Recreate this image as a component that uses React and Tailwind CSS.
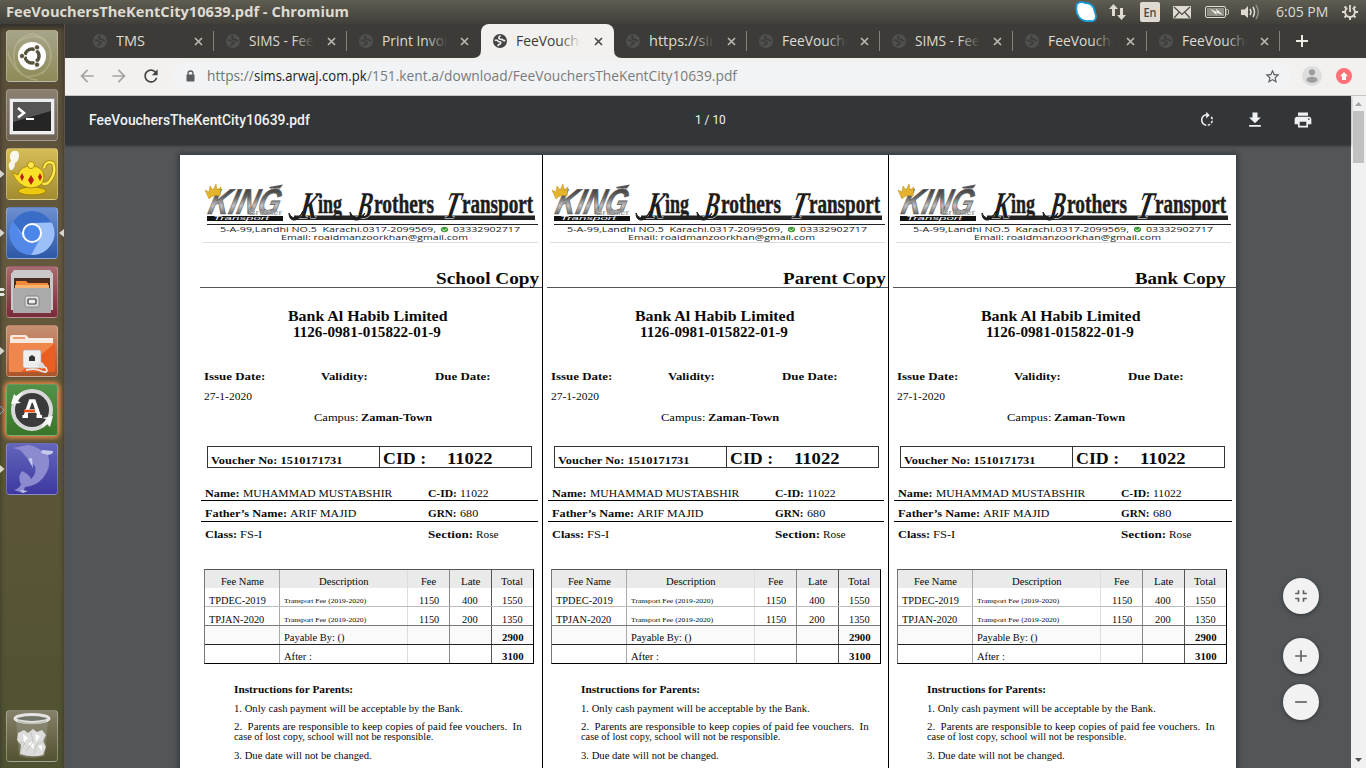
import React, { useLayoutEffect, useRef } from 'react';
import {
  MdRotateRight, MdFileDownload, MdPrint, MdRefresh, MdArrowBack, MdArrowForward,
  MdStarBorder, MdFullscreenExit, MdAdd, MdRemove,
} from 'react-icons/md';

/* Text stretched horizontally so that it fills a box of the given width. */
function Fit({ w, className = '', children }) {
  const ref = useRef(null);
  useLayoutEffect(() => {
    const el = ref.current;
    el.style.transform = `scaleX(${w / el.offsetWidth})`;
  }, [w, children]);
  return (
    <span className={`inline-block shrink-0 text-left ${className}`} style={{ width: w }}>
      <span ref={ref} className="inline-block origin-left whitespace-pre">{children}</span>
    </span>
  );
}

function Globe({ active }) {
  return (
    <svg viewBox="0 0 14 14" className={`h-3.5 w-3.5 shrink-0 ${active ? 'text-[#444444]' : 'text-[#50504d]'}`}>
      <circle cx="7" cy="7" r="7" fill="currentColor" />
      <path d="M1.700 6.200 H4.200 Q5 8 7.600 8 Q8.200 9.600 6.600 10.200 Q5 10.400 5.200 12.200 M7.600 1.800 Q5.600 2.600 5.800 4.400 Q7.600 5.800 9.400 5.400 Q10.600 7 12.300 6.600" fill="none" stroke={active ? '#f2f1f0' : '#3c3b37'} strokeWidth="1.600" />
    </svg>
  );
}

function Title({ active, title, w }) {
  return (
    <div className="relative ml-[9px] h-5 w-[72px] shrink-0 overflow-hidden text-[14px] leading-5">
      <Fit w={w}>{title}</Fit>
      {w > 60 && (
        <div className={`absolute right-0 top-0 h-5 w-7 bg-gradient-to-r ${active ? 'from-[#f2f1f000] to-[#f2f1f0] to-75%' : 'from-[#3c3b3700] to-[#3c3b37] to-75%'}`} />
      )}
    </div>
  );
}

function Tab({ title, w, active, sep }) {
  return (
    <div className={`flex h-[34px] w-[133.2px] shrink-0 items-center pl-3 ${active ? 'relative rounded-t-lg bg-[#f2f1f0] text-[#3c3b37]' : 'text-[#dfdbd2]'}`}>
      <Globe active={active} />
      <Title active={active} title={title} w={w} />
      <svg viewBox="0 0 13 13" className={`ml-1 h-[13px] w-[13px] shrink-0 ${active ? 'text-[#4a4946]' : 'text-[#bab7b0]'}`}>
        <path d="M3 3 L10 10 M10 3 L3 10" stroke="currentColor" strokeWidth="1.700" />
      </svg>
      {sep && <div className="ml-auto h-5 w-px shrink-0 bg-[#84827c]" />}
      {active && (
        <>
          <svg viewBox="0 0 8 8" className="absolute -left-2 bottom-0 h-2 w-2"><path d="M8 0 V8 H0 Q8 8 8 0" fill="#f2f1f0" /></svg>
          <svg viewBox="0 0 8 8" className="absolute -right-2 bottom-0 h-2 w-2"><path d="M0 0 V8 H8 Q0 8 0 0" fill="#f2f1f0" /></svg>
        </>
      )}
    </div>
  );
}

const tabs = [
  { title: 'TMS', w: 29, sep: true },
  { title: 'SIMS - Fee_', w: 71, sep: true },
  { title: 'Print Invoice', w: 80 },
  { title: 'FeeVouchers', w: 83, active: true },
  { title: 'https://sims', w: 81, sep: true },
  { title: 'FeeVouchers', w: 83, sep: true },
  { title: 'SIMS - Fee_', w: 71, sep: true },
  { title: 'FeeVouchers', w: 83, sep: true },
  { title: 'FeeVouchers', w: 83, sep: true },
];

function StatusIcons() {
  return (
    <svg viewBox="1070 0 200 24" className="h-6 w-[200px]">
      <path d="M1077 4 Q1080 1 1085 3 Q1092 3 1094 9 Q1095 13 1096 16 Q1096 22 1090 21 Q1083 22 1079 17 Q1075 12 1077 4Z" fill="#fff" stroke="#189cda" strokeWidth="1.8" />
      <g fill="#dfdbd2">
        <path d="M1109 9 L1113.500 4 L1118 9 H1115 V16 H1112 V9Z M1117 15 H1120 V8 H1123 V15 H1126 L1121.500 20Z" />
        <rect x="1140" y="2" width="20" height="20" rx="2" />
        <rect x="1173" y="6" width="18" height="12.500" />
        <path d="M1241 9.500 H1244.500 L1248 6 V18 L1244.500 15 H1241Z" />
      </g>
      <text x="1143.500" y="17" fontSize="12" fontWeight="600" textLength="13" lengthAdjust="spacingAndGlyphs" fill="#4a4843" fontFamily="Open Sans, sans-serif">En</text>
      <path d="M1174 7 L1182 14.500 L1190 7 M1174 18 L1179 12.500 M1190 18 L1185 12.500" fill="none" stroke="#4a4843" strokeWidth="1.200" />
      <rect x="1205.500" y="6.500" width="20" height="11" rx="1.500" fill="none" stroke="#dfdbd2" />
      <rect x="1207" y="8" width="17" height="8" fill="#908d85" />
      <rect x="1226" y="9.500" width="2.500" height="5" rx="1" fill="none" stroke="#dfdbd2" strokeWidth=".8" />
      <path d="M1210 9 L1217 12 L1216 8.500 L1223 15 L1216 12.500 L1217 15.500Z" fill="#f2efe8" />
      <path d="M1250 9 Q1252 12 1250 15" fill="none" stroke="#dfdbd2" strokeWidth="1.500" />
      <path d="M1253 7 Q1256 12 1253 17" fill="none" stroke="#dfdbd2" strokeWidth="1.500" />
      <path d="M1256 5 Q1260.500 12 1256 19" fill="none" stroke="#8f8c84" strokeWidth="1.500" />
    </svg>
  );
}

function PowerGear() {
  return (
    <svg viewBox="0 0 16 16" className="ml-[14px] h-4 w-4" fill="none" stroke="#dfdbd2">
      <path d="M5.300 4 A4.900 4.900 0 1 0 10.700 4 M8 1 V8" strokeWidth="1.800" />
      <path d="M2.500 2.500 L4.300 4.300 M13.500 2.500 L11.700 4.300 M0 8 H3 M13 8 H16 M2.500 13.500 L4.300 11.700 M13.500 13.500 L11.700 11.700 M8 13 V16" strokeWidth="2" />
    </svg>
  );
}

function MenuBar() {
  return (
    <header className="flex h-6 items-center bg-gradient-to-b from-[#5f5d50] to-[#403f3a] pl-1.5 text-[14px] leading-6 text-[#dfdbd2]">
      <Fit w={343} className="font-bold">FeeVouchersTheKentCity10639.pdf - Chromium</Fit>
      <div className="ml-[721px]"><StatusIcons /></div>
      <Fit w={52} className="ml-1.5">6:05 PM</Fit>
      <PowerGear />
    </header>
  );
}

const art = {
  dash: (
    <>
      <path d="M26 4 Q48 8 44 32 Q38 48 18 46 M26 4 Q6 8 8 30 Q12 48 32 50 M10 14 Q28 0 40 12 Q52 28 36 44 M2 22 Q8 46 30 50" fill="none" stroke="#d5d0b0" strokeOpacity=".35" strokeWidth="1.500" />
      <circle cx="26" cy="26" r="14" fill="#fff" />
      <circle cx="26" cy="26" r="7" fill="none" stroke="#57523c" strokeWidth="3.400" strokeDasharray="13 1.660" strokeDashoffset="6.500" />
      <g fill="#57523c" stroke="#fff" strokeWidth=".8"><circle cx="16" cy="26" r="2.600" /><circle cx="31" cy="17.300" r="2.600" /><circle cx="31" cy="34.700" r="2.600" /></g>
    </>
  ),
  terminal: (
    <>
      <rect x="3.500" y="9.500" width="45" height="36" rx="1" fill="#eee" stroke="#999" />
      <rect x="7" y="13" width="38" height="29" fill="#252525" />
      <path d="M7 13 H45 V22 L7 33Z" fill="#555" />
      <path d="M12 19 L18 24 L12 28.500" fill="none" stroke="#fff" strokeWidth="2.500" />
      <path d="M20 30 H28" stroke="#fff" strokeWidth="2" />
    </>
  ),
  teapot: (
    <>
      <path d="M4 22 Q1 16 5 13 Q2 6 7 3 Q13 2 13 7 Q13 13 9 15 Q9 20 6 22Z" fill="#f7f7f0" />
      <path d="M38 20 Q40 12 47 15 Q51 24 43 34 Q38 38 35 34" fill="none" stroke="#9c8106" strokeWidth="4" />
      <path d="M38 20 Q40 12 47 15 Q51 24 43 34 Q38 38 35 34" fill="none" stroke="#ffe94e" strokeWidth="2.400" />
      <ellipse cx="26" cy="43" rx="14" ry="4" fill="#edc910" stroke="#9c8106" />
      <path d="M6 24 Q9 26 12 27 Q14 18 25 18 Q38 18 38 30 Q37 39 25 40 Q12 39 6 24Z" fill="#fbe02a" stroke="#b08d06" />
      <circle cx="25" cy="17" r="3.500" fill="#ffe94e" stroke="#b08d06" />
      <g fill="#bd1c16"><path d="M16 25 l2 4 l-2 4 l-2 -4z M25 27 l3 5 l-3 5 l-3 -5z M34 25 l2 4 l-2 4 l-2 -4z" /></g>
    </>
  ),
  chromium: (
    <>
      <circle cx="26" cy="26" r="22" fill="#6d9df0" />
      <path d="M7 15 A22 22 0 0 1 45 15 L26 16 L16 26Z" fill="#3a6dc8" />
      <path d="M26 16 H46 A22 22 0 0 1 25 48 L35 30Z" fill="#9bbff8" />
      <path d="M7 14 A22 22 0 0 0 25 48 L32 35 L17 31Z" fill="#5288e8" />
      <circle cx="26" cy="26" r="10" fill="#fff" /><circle cx="26" cy="26" r="8" fill="#4a85ea" />
    </>
  ),
  drawer: (
    <>
      <path d="M8 4 H44 L47 8 V44 H5 V8Z" fill="#c9c9c9" /><rect x="8" y="12" width="36" height="12" fill="#4b2c20" />
      <path d="M10 15 H20 L22 17 H42 V22 H10Z" fill="#f28a3c" /><path d="M9 19 H43 V24 H9Z" fill="#f6b36f" />
      <path d="M7 22 H45 V47 H7Z" fill="#aaa" />
      <rect x="19" y="30" width="14" height="11" rx="2" fill="#ddd" stroke="#888" /><rect x="22" y="33" width="8" height="5" rx="1" fill="#eee" stroke="#333" strokeWidth="1.200" />
    </>
  ),
  folder: (
    <>
      <path d="M4 46 V12 Q4 10 6 10 H20 L23 13 H47 V46Z" fill="#f6e9df" /><path d="M7 12 H19 V14 H7Z" fill="#ee9b70" />
      <rect x="3" y="18" width="46" height="29" rx="1" fill="#ea5e24" /><path d="M3 18 H49 L15 47 H3Z" fill="#f3a266" fillOpacity=".6" />
      <rect x="17" y="25" width="18" height="18" rx="2" fill="#eee" stroke="#aaa" strokeWidth=".6" />
      <path d="M23 36 V32 L26 30 L29 32 V36Z" fill="#333" />
      <path d="M20 45 Q30 43 35 46 Q43 49 40 43 L36 41" fill="none" stroke="#e8e8e8" strokeWidth="1.800" />
      <path d="M31 40 L36 37 L39 41 L36 44Z" fill="#ddd" />
    </>
  ),
  updater: (
    <>
      <circle cx="26" cy="26" r="19" fill="#3b3b3b" stroke="#d8d8d8" strokeWidth="4" />
      <path d="M5 20 L8 10 L10 12 L17 8 L12 17 L15 19Z M47 32 L44 43 L41 40 L35 44 L40 35 L36 34Z" fill="#f8f8f8" />
      <path d="M19 33 L24.500 17 H28 L33.500 33" fill="none" stroke="#fff" strokeWidth="3.600" />
      <path d="M19 27 H33" stroke="#fff" strokeWidth="3.500" />
      <path d="M18 27 H29" stroke="#ed4f19" strokeWidth="2.500" />
      <path d="M16.500 32.500 H22 M30.500 32.500 H36" stroke="#fff" strokeWidth="3" />
    </>
  ),
  dolphin: (
    <>
      <path d="M7 5 L22 2 Q30 3 36 8 L47 9 Q48 11 42 12 Q46 24 37 35 Q30 43 19 44 L17 50 L8 47 Q14 45 15 41 Q11 34 16 28 Q23 31 25 36 Q31 31 29 23 L22 16 Q17 10 14 7Z" fill="#8d8bd0" />
      <path d="M36 7 L47 8 Q48 10 42 12 L35 10Z M22 16 L26 15 L27 25Z M14 47 L22 48 L17 50Z" fill="#c4cbe8" />
    </>
  ),
  trash: (
    <>
      <path d="M10 10 L13 46 Q26 50 39 46 L42 10Z" fill="#a4a59a" fillOpacity=".35" />
      <path d="M14 44 L15 35 L11 30 L12 23 L18 20 L22 23 L27 19 L31 22 L36 20 L40 25 L37 31 L40 37 L37 45 Q26 48 14 44Z" fill="#dcdcda" />
      <path d="M17 24 l5 4 l-4 5 z M29 24 l5 2 l-4 6z M22 34 l5 -3 l1 8z M32 36 l4 -1 l0 6z" fill="#fff" />
      <path d="M12 32 L19 33 L15 39 M25 22 L27 32 L20 41 M38 31 L31 34 L28 44" fill="none" stroke="#c4c4c0" />
      <ellipse cx="26" cy="8.500" rx="17" ry="4" fill="#74756a" stroke="#e4e4e2" strokeWidth="3" />
      <path d="M12 11 Q26 16 40 11" fill="none" stroke="#c0c0bd" strokeWidth="1.500" />
    </>
  ),
};

const launcher = [
  { id: 'dash', bg: 'from-[#a7a58a] to-[#8e8a57]' },
  { id: 'terminal', bg: 'from-[#8a7f70] to-[#6e6454]' },
  { id: 'teapot', bg: 'from-[#d5be58] to-[#a38c31]', left: 'solid' },
  { id: 'chromium', bg: 'from-[#6c8fd0] to-[#2d58a5]', left: 'solid', right: true },
  { id: 'drawer', bg: 'from-[#a66b70] to-[#792a38]', left: 'double' },
  { id: 'folder', bg: 'from-[#c69073] to-[#a95529]', left: 'solid' },
  { id: 'updater', bg: 'from-[#519248] to-[#3a7529]', left: 'open', glow: true },
  { id: 'dolphin', bg: 'from-[#6465bc] to-[#3d38a0]', left: 'solid' },
];

function Marker({ kind }) {
  if (!kind) return <div className="w-1.5" />;
  return (
    <svg viewBox="0 0 6 10" className="h-2.5 w-1.5">
      {kind === 'open' && <path d="M0 1 L4 5 L0 9" fill="none" stroke="#62b5dc" />}
      {kind === 'solid' && <path d="M0 1 L4.500 5 L0 9Z" fill="#d6d5d0" />}
      {kind === 'double' && <path d="M0 1 H3.500 L5 2.500 L3.500 4 H0Z M0 6 H3.500 L5 7.500 L3.500 9 H0Z" fill="#e4e4e0" />}
    </svg>
  );
}

function Launcher() {
  return (
    <nav className="flex w-[65px] shrink-0 flex-col gap-[7px] border-r border-[#5f5148] bg-gradient-to-b from-[#554b36] via-[#65583d] via-30% to-[#4f5230] pt-1.5 shadow-[inset_0_4px_4px_#34322d]">
      {launcher.map((a) => (
        <div key={a.id} className="flex items-center">
          <Marker kind={a.left} />
          <div className={`h-[52px] w-[52px] overflow-hidden rounded border border-white/25 bg-gradient-to-b ${a.bg} ${a.glow ? 'shadow-[0_0_4px_2px_#e98a44]' : ''}`}>
            <svg viewBox="1 1 50 50" className="h-full w-full">{art[a.id]}</svg>
          </div>
          {a.right && <svg viewBox="0 0 5 10" className="ml-px h-2.5 w-[5px]"><path d="M5 1 L0 5 L5 9Z" fill="#d6d5d0" /></svg>}
        </div>
      ))}
      <div className="mb-1.5 ml-1.5 mt-auto h-[52px] w-[52px] rounded border border-white/30 bg-gradient-to-b from-[#85806a] to-[#53522f]">
        <svg viewBox="1 1 50 50" className="h-full w-full">{art.trash}</svg>
      </div>
    </nav>
  );
}

function AddressBar() {
  return (
    <div className="flex h-[38px] items-center border-b border-[#c6c5c3] bg-[#f2f1f0] pb-px pl-3">
      <MdArrowBack className="h-5 w-5 text-[#a5a4a3]" />
      <MdArrowForward className="ml-3 h-5 w-5 text-[#a5a4a3]" />
      <MdRefresh className="ml-3 h-5 w-5 text-[#444]" />
      <div className="ml-3 flex h-7 w-[1117px] items-center rounded-full bg-[#f1f3f4] pl-[13px] text-[14px] leading-7">
        <svg viewBox="0 0 9 12" className="mb-px h-3 w-[9px]"><path d="M2 5 V3.500 A2.500 2.500 0 0 1 7 3.500 V5" fill="none" stroke="#5a5d61" strokeWidth="1.300" /><rect x=".5" y="4.500" width="8" height="7" rx=".8" fill="#5a5d61" /></svg>
        <Fit w={47} className="ml-[12px] text-[#6f7478]">https://</Fit>
        <Fit w={113} className="text-[#202124]">sims.arwaj.com.pk</Fit>
        <Fit w={370} className="text-[#777c80]">/151.kent.a/download/FeeVouchersTheKentCity10639.pdf</Fit>
        <MdStarBorder className="ml-auto mr-[9px] h-[17px] w-[17px] text-[#5a5d61]" />
      </div>
      <svg viewBox="0 0 20 20" className="ml-3 h-5 w-5"><circle cx="10" cy="10" r="10" fill="#dedede" /><circle cx="10" cy="6.300" r="3.100" fill="#9d9d9d" /><ellipse cx="10" cy="13.700" rx="5.600" ry="3" fill="#9d9d9d" /></svg>
      <svg viewBox="0 0 16 16" className="ml-3.5 h-4 w-4"><circle cx="8" cy="8" r="8" fill="#ff7077" /><path d="M8 4 L12 8.200 H10 V12 H6 V8.200 H4Z" fill="#fff" /></svg>
    </div>
  );
}

function Letterhead() {
  return (
    <svg viewBox="201 178 339 66" className="ml-[5px] h-[66px] w-[339px] shrink-0">
      <defs>
        <linearGradient id="steel" x1="0" y1="0" x2="0" y2="1">
          <stop offset="0" stopColor="#222" /><stop offset=".4" stopColor="#666" /><stop offset=".6" stopColor="#c4c4c4" /><stop offset="1" stopColor="#111" />
        </linearGradient>
      </defs>
      <path d="M203 242.500 H538" stroke="#ddd" />
      <text transform="translate(207 214) skewX(-14)" fontSize="36" fontWeight="bold" fontStyle="italic" textLength="71" lengthAdjust="spacingAndGlyphs" fontFamily="Liberation Sans, sans-serif" fill="url(#steel)" stroke="#555" strokeWidth=".7">KING</text>
      <path d="M269 187 L283 184.500 L280 188.500 H270Z" fill="#555" />
      <path d="M205 190 L209 192 L210 186 L213 190 L216 184 L217 190 L221 187 L220 196 Q213 194 209 199Z" fill="#e3b32c" stroke="#bb8b18" strokeWidth=".5" />
      <rect x="207" y="216" width="76" height="5" fill="#111" />
      <text x="249" y="215" fontSize="6.500" fontWeight="bold" textLength="33" lengthAdjust="spacingAndGlyphs" fontFamily="Liberation Sans, sans-serif" fill="#777" stroke="#fff" strokeWidth=".2">Brother</text>
      <text x="213" y="220.300" fontSize="5.500" fontStyle="italic" textLength="56" lengthAdjust="spacingAndGlyphs" fontFamily="Liberation Sans, sans-serif" fill="#fff">Transport</text>
      <rect x="294" y="215.500" width="241" height="4.500" fill="#222" />
      <g fontFamily="Liberation Serif, serif" fontWeight="bold" fill="#1d1d1d">
        <g fontStyle="italic" fontSize="38" stroke="#fff" strokeWidth="1" paintOrder="stroke">
          <text transform="translate(299 218) skewX(-8)" textLength="17" lengthAdjust="spacingAndGlyphs">K</text>
          <text transform="translate(356 218) skewX(-8)" textLength="15" lengthAdjust="spacingAndGlyphs">B</text>
          <text transform="translate(443 218) skewX(-12)" textLength="15" lengthAdjust="spacingAndGlyphs">T</text>
        </g>
        <g fontSize="28" stroke="#1d1d1d" strokeWidth=".5">
          <text x="318" y="213" textLength="24" lengthAdjust="spacingAndGlyphs">ing</text>
          <text x="374" y="213" textLength="60" lengthAdjust="spacingAndGlyphs">rothers</text>
          <text x="462" y="213" textLength="71" lengthAdjust="spacingAndGlyphs">ransport</text>
        </g>
      </g>
      <path d="M289 213 Q290 217 294 218 Q299 219 303 211 Q299 221 293 220 Q289 219 289 213Z M350 212 Q352 217 356 218 Q361 218 365 213 Q361 221 355 220 Q350 218 350 212Z" fill="#1d1d1d" stroke="#1d1d1d" />
      <path d="M207 224.500 H538" stroke="#222" />
      <g fontFamily="Open Sans, sans-serif" fontSize="7" fill="#222">
        <text x="220" y="232" textLength="216" lengthAdjust="spacingAndGlyphs">5-A-99,Landhi NO.5&#160; Karachi.0317-2099569,</text>
        <text x="453" y="232" textLength="67" lengthAdjust="spacingAndGlyphs">03332902717</text>
        <text x="281" y="240" textLength="187" lengthAdjust="spacingAndGlyphs">Email: roaidmanzoorkhan@gmail.com</text>
      </g>
      <ellipse cx="444.500" cy="229.500" rx="3.600" ry="2.800" fill="#3c9b35" />
      <path d="M442.500 229 L444 231 L447 228.500" fill="none" stroke="#fff" strokeWidth=".8" />
    </svg>
  );
}

const feeRows = [
  ['TPDEC-2019', '1150', '400', '1550'],
  ['TPJAN-2020', '1150', '200', '1350'],
];

function FeeTable() {
  const cols = 'grid grid-rows-1 grid-cols-[75px_128px_42px_42px_42px]';
  return (
    <div className="ml-2 w-[330px] shrink-0 border border-t-[#555] border-l-[#777] border-b-black border-r-black text-[9.800px] leading-[22px]">
      <div className={`${cols} h-[18px] bg-[#eaeaea] leading-[24px]`}>
        <div className="border-r border-[#aaa] pl-4"><Fit w={43}>Fee Name</Fit></div>
        <div className="border-r border-[#ddd] pl-[39px]"><Fit w={50}>Description</Fit></div>
        <div className="border-r border-[#888] pl-[13px]"><Fit w={15}>Fee</Fit></div>
        <div className="border-r border-[#555] pl-[11px]"><Fit w={19}>Late</Fit></div>
        <div className="pl-[9px]"><Fit w={22}>Total</Fit></div>
      </div>
      {feeRows.map(([name, fee, late, total], i) => (
        <div key={name} className={`${cols} h-[19px] border-b leading-[26px] ${i ? 'border-[#777]' : 'border-[#bbb]'}`}>
          <div className="border-r border-[#aaa] pl-1"><Fit w={name === 'TPDEC-2019' ? 57 : 55}>{name}</Fit></div>
          <div className="border-r border-[#ddd] pl-1 text-[6.500px]"><Fit w={82}>Transport Fee (2019-2020)</Fit></div>
          <div className="border-r border-[#888] pl-[11px]"><Fit w={20}>{fee}</Fit></div>
          <div className="border-r border-[#555] pl-3"><Fit w={16}>{late}</Fit></div>
          <div className="pl-2.5"><Fit w={21}>{total}</Fit></div>
        </div>
      ))}
      <div className={`${cols} h-[19px] border-b border-[#222] bg-[#fafafa] leading-[24px]`}>
        <div className="border-r border-[#aaa]" />
        <div className="border-r border-[#ddd] pl-1"><Fit w={61}>Payable By: ()</Fit></div>
        <div className="border-r border-[#888]" />
        <div className="border-r border-[#555]" />
        <div className="pl-2.5 font-bold"><Fit w={22}>2900</Fit></div>
      </div>
      <div className={`${cols} h-[18px] leading-[24px]`}>
        <div className="border-r border-[#aaa]" />
        <div className="border-r border-[#ddd] pl-1"><Fit w={28}>After :</Fit></div>
        <div className="border-r border-[#888]" />
        <div className="border-r border-[#555]" />
        <div className="pl-2.5 font-bold"><Fit w={22}>3100</Fit></div>
      </div>
    </div>
  );
}

function Field({ label, lw, value, vw }) {
  return (
    <span className="flex gap-[3px]">
      <Fit w={lw} className="font-bold">{label}</Fit>
      <Fit w={vw}>{value}</Fit>
    </span>
  );
}

function Voucher({ copy, cw, end, width, border, shift = '' }) {
  return (
    <section className={`h-[640px] shrink-0 overflow-hidden pt-[23px] text-[10.800px] ${width} ${border ? 'border-r border-black' : ''}`}>
      <div className={`flex flex-col ${shift}`}>
        <Letterhead />
        <div className={`ml-1 mt-[23px] flex h-[21px] shrink-0 justify-end border-b border-[#555] text-[17px] font-bold leading-[24px] ${end}`}>
          <Fit w={cw}>{copy}</Fit>
        </div>
        <div className="ml-[92px] mt-[21px] flex flex-col text-[14px] font-bold leading-4">
          <Fit w={159}>Bank Al Habib Limited</Fit>
          <Fit w={148} className="ml-[5px]">1126-0981-015822-01-9</Fit>
        </div>
        <div className="ml-2 mt-[25px] flex font-bold leading-5">
          <Fit w={61}>Issue Date:</Fit>
          <Fit w={47} className="ml-[56px]">Validity:</Fit>
          <Fit w={55} className="ml-[67px]">Due Date:</Fit>
        </div>
        <div className="ml-2 flex leading-5"><Fit w={48}>27-1-2020</Fit></div>
        <div className="ml-[118px] flex gap-[3px] leading-[22px]">
          <Fit w={44}>Campus:</Fit>
          <Fit w={71} className="font-bold">Zaman-Town</Fit>
        </div>
        <div className="ml-[11px] mt-[18px] flex h-[22px] w-[325px] shrink-0 border border-[#333] font-bold">
          <div className="w-[172px] border-r border-[#333] pl-[3px] leading-[27px]"><Fit w={132}>Voucher No: 1510171731</Fit></div>
          <div className="flex pl-[3px] text-[17px] leading-[24px]">
            <Fit w={43}>CID :</Fit>
            <Fit w={46} className="ml-[21px]">11022</Fit>
          </div>
        </div>
        <div className="ml-[5px] mr-1 mt-[15px] grid h-[18px] shrink-0 grid-cols-[223px_1fr] border-b border-black pl-[4px] leading-[20px]">
          <Field label="Name:" lw={35} value="MUHAMMAD MUSTABSHIR" vw={149} />
          <Field label="C-ID:" lw={29} value="11022" vw={29} />
        </div>
        <div className="ml-[5px] mr-1 grid h-[21px] shrink-0 grid-cols-[223px_1fr] border-b border-black pl-[4px] leading-[25px]">
          <Field label="Father’s Name:" lw={82} value="ARIF MAJID" vw={66} />
          <Field label="GRN:" lw={29} value="680" vw={18} />
        </div>
        <div className="ml-[5px] mr-1 grid h-[19px] shrink-0 grid-cols-[223px_1fr] pl-[4px] leading-[25px]">
          <Field label="Class:" lw={32} value="FS-I" vw={22} />
          <Field label="Section:" lw={45} value="Rose" vw={23} />
        </div>
        <div className="h-7 shrink-0" />
        <FeeTable />
        <div className="ml-[38px] mt-[17px] flex flex-col text-[9.800px] leading-[10px]">
          <Fit w={119} className="mt-1 font-bold">Instructions for Parents:</Fit>
          <Fit w={229} className="mt-[9px]">1. Only cash payment will be acceptable by the Bank.</Fit>
          <Fit w={288} className="mt-2">2.  Parents are responsible to keep copies of paid fee vouchers.  In</Fit>
          <Fit w={199}>case of lost copy, school will not be responsible.</Fit>
          <Fit w={138} className="mt-[9px]">3. Due date will not be changed.</Fit>
        </div>
      </div>
    </section>
  );
}

function RoundButton({ icon: Icon, className = '' }) {
  return (
    <button className={`flex h-9 w-9 items-center justify-center rounded-full bg-[#f2f2f2] text-[#616161] shadow-[0_1px_4px_#0006] ${className}`}>
      <Icon className="h-5 w-5" />
    </button>
  );
}

function PdfViewer() {
  return (
    <main className="relative flex flex-1 overflow-hidden bg-[#525659]">
      <div className="flex w-[1286px] flex-col">
        <div className="z-10 flex h-[49px] shrink-0 items-center bg-[#323639] pb-px pl-6 font-['Roboto',sans-serif] text-[14px] text-[#f1f1f1] shadow-[0_1px_3px_#0006]">
          <Fit w={221} className="font-medium">FeeVouchersTheKentCity10639.pdf</Fit>
          <Fit w={31} className="ml-[385px] text-[13px]">1 / 10</Fit>
          <MdRotateRight className="ml-[472px] h-[18px] w-[18px]" />
          <MdFileDownload className="ml-[29px] h-5 w-5" />
          <MdPrint className="ml-7 h-5 w-5" />
        </div>
        <div className="ml-[115px] mt-2.5 flex w-[1056px] bg-white pl-4 font-['Liberation_Serif',serif] text-[#0a0a0a] shadow-[0_0_5px_2px_#0005]">
          <Voucher copy="School Copy" cw={103} end="pr-[3px]" width="w-[347px]" border />
          <Voucher copy="Parent Copy" cw={103} end="pr-0.5" width="w-[346px]" border shift="-ml-[0.5px]" />
          <Voucher copy="Bank Copy" cw={91} end="pr-2.5" width="w-[347px]" />
        </div>
      </div>
      <div className="flex w-[15px] flex-col items-center justify-between bg-[#f1f1f1]">
        <div>
          <svg viewBox="0 0 11 15" className="h-[15px] w-[11px]"><path d="M2 10 L5.500 6 L9 10Z" fill="#a3a3a3" /></svg>
          <div className="h-[52px] w-[11px] bg-[#c1c1c1]" />
        </div>
        <svg viewBox="0 0 11 15" className="h-[15px] w-[11px]"><path d="M2 5 H9 L5.500 9Z" fill="#505050" /></svg>
      </div>
      <div className="absolute right-[47px] top-[482px] flex flex-col">
        <RoundButton icon={MdFullscreenExit} />
        <RoundButton icon={MdAdd} className="mt-6" />
        <RoundButton icon={MdRemove} className="mt-2.5" />
      </div>
    </main>
  );
}

export default function App() {
  return (
    <div className="flex h-[768px] w-[1366px] flex-col overflow-hidden font-['Open_Sans',sans-serif]">
      <MenuBar />
      <div className="flex min-h-0 flex-1">
        <Launcher />
        <div className="flex min-w-0 flex-1 flex-col">
          <div className="flex h-[34px] shrink-0 items-center bg-[#3c3b37] pl-4">
            {tabs.map((t, i) => <Tab key={i} {...t} />)}
            <svg viewBox="0 0 12 12" className="ml-[16px] h-3 w-3"><path d="M6 0 V12 M0 6 H12" stroke="#eeeae1" strokeWidth="2" /></svg>
          </div>
          <AddressBar />
          <PdfViewer />
        </div>
      </div>
    </div>
  );
}
